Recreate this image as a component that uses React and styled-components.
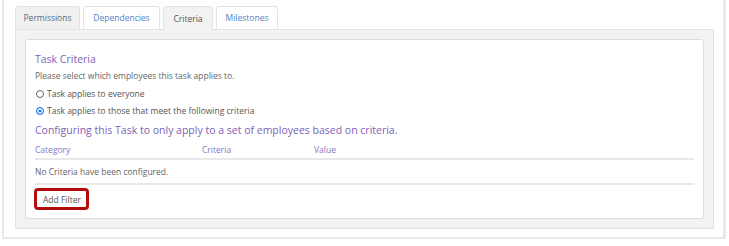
import React from "react";
import styled, { createGlobalStyle } from "styled-components";

const Global = createGlobalStyle`
  html, body { margin: 0; padding: 0; background: #fff; }
  body { font-family: "Open Sans", "Liberation Sans", sans-serif; }
  * { box-sizing: border-box; }
`;

const Frame = styled.div`
  margin-left: 2px;
  width: 724px;
  height: 239px;
  border-left: 2px solid #e8e8ef;
  border-right: 3px solid #e8e8ef;
  border-bottom: 2px solid #e8e8ef;
  padding: 6px 9px 8px 11px;
  display: flex;
  flex-direction: column;
`;

const TabBar = styled.div`
  display: flex;
  gap: 3px;
  height: 23px;
`;

const Tab = styled.div`
  width: ${(p) => p.$w}px;
  height: 23px;
  display: flex;
  align-items: center;
  justify-content: center;
  padding-bottom: 1px;
  font-size: 8.5px;
  border: 1px solid #e3e3e3;
  border-bottom: none;
  border-radius: 3px 3px 0 0;
  background: ${(p) => (p.$gray ? "#f0f0f0" : "#fff")};
  color: ${(p) => p.$color};
  ${(p) => (p.$active ? "background:#f2f2f2; height:24px; margin-bottom:-1px; position:relative; z-index:1;" : "")}
`;

const Panel = styled.div`
  flex: 1;
  background: #f2f2f2;
  border: 1px solid #e2e2e2;
  padding: 9px 9px 9px 9px;
  display: flex;
`;

const Card = styled.div`
  flex: 1;
  background: #fff;
  border: 1px solid #dcdcdc;
  border-radius: 3px;
  padding: 11px 9px 0 9px;
`;

const Title = styled.div`
  font-size: 10.5px;
  line-height: 16px;
  color: #7d5fb8;
`;

const Note = styled.div`
  font-size: 8.5px;
  line-height: 16px;
  color: #666;
  margin-top: ${(p) => p.$mt || 0}px;
`;

const RadioRow = styled.label`
  display: flex;
  align-items: center;
  gap: 3px;
  font-size: 8.5px;
  line-height: 16px;
  height: 16px;
  color: #555;
  margin-top: ${(p) => p.$mt || 0}px;
`;

const Radio = styled.span`
  width: 8px;
  height: 8px;
  border-radius: 50%;
  border: 1px solid ${(p) => (p.$on ? "#1a73e8" : "#666")};
  background: ${(p) => (p.$on ? "#1a73e8" : "#fff")};
  box-shadow: ${(p) => (p.$on ? "inset 0 0 0 1.5px #fff" : "none")};
  margin-left: 1px;
`;

const Subtitle = styled.div`
  font-size: 10.5px;
  line-height: 16px;
  color: #7d5fb8;
  margin-top: 3px;
`;

const Row = styled.div`
  display: grid;
  grid-template-columns: 167px 112px 1fr;
  align-items: center;
  height: ${(p) => p.$h}px;
  padding-top: ${(p) => p.$pt || 0}px;
  border-bottom: 2px solid #e8e8e8;
  font-size: 8.5px;
  color: ${(p) => p.$color};
`;

const Cell = styled.div`
  grid-column: ${(p) => p.$span || "auto"};
`;

const FilterButton = styled.button`
  margin-top: 3px;
  margin-left: -1px;
  width: 55px;
  height: 22px;
  border: 3px solid #b10d0d;
  border-radius: 4px;
  background: #fff;
  font-family: inherit;
  font-size: 8.5px;
  color: #555;
  padding: 0 0 0 6px;
  text-align: left;
`;

export default function App() {
  return (
    <>
      <Global />
      <Frame>
        <TabBar>
          <Tab $w={65} $gray $color="#5a6b82">Permissions</Tab>
          <Tab $w={77} $color="#4f86c6">Dependencies</Tab>
          <Tab $w={50} $active $color="#555">Criteria</Tab>
          <Tab $w={62} $color="#4f86c6">Milestones</Tab>
        </TabBar>
        <Panel>
          <Card>
            <Title>Task Criteria</Title>
            <Note $mt={1}>Please select which employees this task applies to.</Note>
            <RadioRow $mt={2}>
              <Radio />
              Task applies to everyone
            </RadioRow>
            <RadioRow $mt={1}>
              <Radio $on />
              Task applies to those that meet the following criteria
            </RadioRow>
            <Subtitle>Configuring this Task to only apply to a set of employees based on criteria.</Subtitle>
            <Row $h={22} $pt={3} $color="#8a74c0">
              <Cell>Category</Cell>
              <Cell>Criteria</Cell>
              <Cell>Value</Cell>
            </Row>
            <Row $h={25} $color="#666">
              <Cell $span="1 / 4">No Criteria have been configured.</Cell>
            </Row>
            <FilterButton>Add Filter</FilterButton>
          </Card>
        </Panel>
      </Frame>
    </>
  );
}
